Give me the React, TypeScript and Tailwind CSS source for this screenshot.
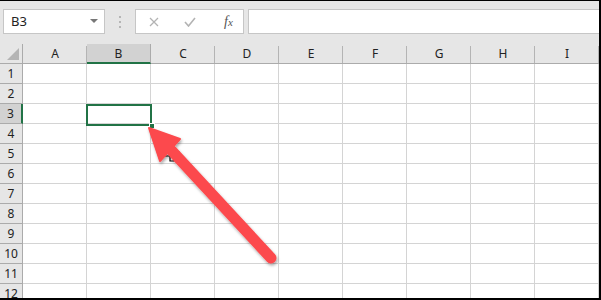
const cols = ["A", "B", "C", "D", "E", "F", "G", "H", "I"]
const rows = [1, 2, 3, 4, 5, 6, 7, 8, 9, 10, 11, 12]

export default function App() {
  return (
    <div
      className="relative w-[601px] h-[300px] overflow-hidden bg-white border-t border-r-2 border-b-2 border-black text-[12px]"
      style={{ fontFamily: '"Noto Sans", "Open Sans", sans-serif' }}
    >
      {/* formula bar */}
      <div className="h-[43px] bg-[#e6e6e6] flex items-start pt-[8px] pl-[3px]">
        <div className="w-[102px] h-[25px] bg-white border border-[#c6c6c6] flex items-center justify-between pl-[7px] pr-[6px] text-[#222] text-[13px]">
          <span>B3</span>
          <svg width="8" height="5" viewBox="0 0 8 5">
            <path d="M0 0h8L4 4z" fill="#777" />
          </svg>
        </div>
        <div className="w-[30px] h-[25px] flex flex-col items-center justify-center gap-[3px]">
          <span className="w-[2px] h-[2px] bg-[#b5b5b5]" />
          <span className="w-[2px] h-[2px] bg-[#b5b5b5]" />
          <span className="w-[2px] h-[2px] bg-[#b5b5b5]" />
        </div>
        <div className="w-[109px] h-[25px] bg-white border border-[#c6c6c6] flex items-center pl-[13px]">
          <svg width="10" height="10" viewBox="0 0 10 10" className="mr-[25px]">
            <path d="M1 1l8 8M9 1l-8 8" stroke="#b3b3b3" strokeWidth="1.3" />
          </svg>
          <svg width="12" height="10" viewBox="0 0 12 10" className="mr-[28px]">
            <path d="M1 5l3.5 4L11 1" stroke="#b3b3b3" strokeWidth="1.6" fill="none" />
          </svg>
          <span
            className="italic text-[#555] text-[14px] leading-none"
            style={{ fontFamily: '"Liberation Serif", serif' }}
          >
            f<span className="text-[11px]">x</span>
          </span>
        </div>
        <div className="flex-1 h-[25px] ml-[4px] bg-white border-t border-b border-l border-[#c6c6c6]" />
      </div>

      {/* grid */}
      <div className="grid grid-cols-[23px_repeat(9,64px)] grid-rows-[20px_repeat(12,20px)]">
        <div className="bg-[#e6e6e6] border-r border-b border-[#ababab] flex items-end justify-end pr-[3px] pb-[3px]">
          <svg width="12" height="12" viewBox="0 0 12 12">
            <path d="M12 0v12H0z" fill="#b4b4b4" />
          </svg>
        </div>
        {cols.map((c) =>
          c === "B" ? (
            <div
              key={c}
              className="bg-[#d2d2d2] border-r border-[#ababab] border-b-2 border-b-[#217346] flex items-center justify-center text-[#222] pt-[1px]"
            >
              {c}
            </div>
          ) : (
            <div
              key={c}
              className="bg-[#e6e6e6] border-b border-[#ababab] flex items-center justify-center text-[#222] relative"
            >
              {c}
              <span className="absolute right-0 top-[2px] bottom-0 w-px bg-[#b4b4b4]" />
            </div>
          )
        )}
        {rows.map((r) => (
          <Row key={r} r={r} />
        ))}
      </div>

      {/* selected cell */}
      <div className="absolute left-[86px] top-[103px] w-[66px] h-[22px] border-2 border-[#217346]" />
      <div className="absolute left-[149px] top-[122px] w-[6px] h-[6px] bg-[#217346] border border-white" />

      {/* arrow */}
      <svg className="absolute left-0 top-0" width="601" height="300" viewBox="0 0 601 300">
        <defs>
          <filter id="sh" x="-20%" y="-20%" width="140%" height="140%">
            <feDropShadow dx="1" dy="2" stdDeviation="1.5" floodColor="#000" floodOpacity="0.35" />
          </filter>
        </defs>
        <path
          d="M170 146h4v5h5v4h-5v5h-4v-5h-5v-4h5z"
          fill="#fff"
          stroke="#000"
          strokeWidth="1.2"
        />
        <g filter="url(#sh)">
          <path d="M172 150L271 257" stroke="#fc4a4d" strokeWidth="11" strokeLinecap="round" />
          <path d="M149 127L180 138L160 160Z" fill="#fc4a4d" stroke="#fc4a4d" strokeWidth="2" strokeLinejoin="round" />
        </g>
      </svg>
    </div>
  )
}

function Row({ r }: { r: number }) {
  const sel = r === 3
  return (
    <>
      <div
        className={
          sel
            ? "bg-[#d2d2d2] border-b border-[#ababab] border-r-2 border-r-[#217346] flex items-center justify-center text-[#222]"
            : "bg-[#e6e6e6] border-b border-r border-[#ababab] flex items-center justify-center text-[#222]"
        }
      >
        {r}
      </div>
      {cols.map((c) => (
        <div key={c} className="border-r border-b border-[#d4d4d4]" />
      ))}
    </>
  )
}
